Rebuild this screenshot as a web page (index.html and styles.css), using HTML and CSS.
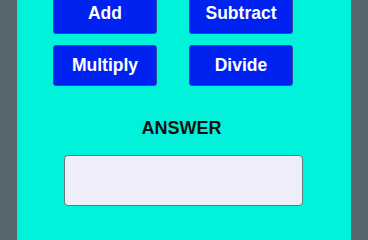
FILE: index.html
```html
<!DOCTYPE html>
<html>
<head>
<meta charset="utf-8">
<link rel="stylesheet" href="styles.css">
</head>
<body>
<div class="panel">
  <div class="ops">
    <button class="op">Add</button>
    <button class="op">Subtract</button>
    <button class="op">Multiply</button>
    <button class="op">Divide</button>
  </div>
  <div class="answer">
    <div class="label">ANSWER</div>
    <div class="box"></div>
  </div>
</div>
</body>
</html>
```
FILE: styles.css
```css
html, body {
  margin: 0;
  padding: 0;
  height: 100%;
  overflow: hidden;
}
body {
  background: #57656d;
  font-family: "Liberation Sans", Arial, sans-serif;
}
.panel {
  margin: 0 17px;
  min-height: 100vh;
  background: #00f2da;
  overflow: hidden;
}
.ops {
  display: grid;
  grid-template-columns: 104px 104px;
  grid-auto-rows: 41px;
  column-gap: 32px;
  row-gap: 11px;
  margin: -7px 0 0 36px;
}
.op {
  background: #0022f0;
  color: #ffffff;
  border: 1px solid #2f45a8;
  border-radius: 3px;
  font-family: "Liberation Sans", Arial, sans-serif;
  font-weight: bold;
  font-size: 17.5px;
  padding: 0;
  margin: 0;
}
.answer {
  width: 239px;
  margin: 32px 0 0 47px;
}
.label {
  text-align: center;
  font-weight: bold;
  font-size: 18px;
  line-height: 21px;
  color: #111111;
  padding-right: 4px;
}
.box {
  margin-top: 16px;
  height: 49px;
  background: #eeeefb;
  border: 1px solid #66767c;
  border-radius: 4px;
}
```
